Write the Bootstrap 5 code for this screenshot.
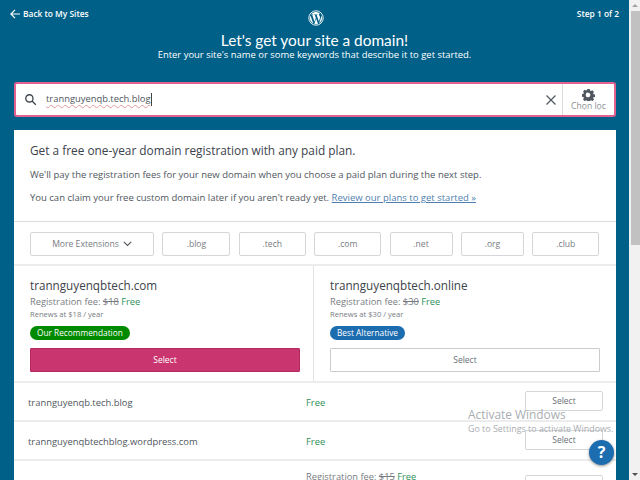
<!doctype html>
<html lang="en"><head><meta charset="utf-8"><title>Domain</title>
<link href="https://cdn.jsdelivr.net/npm/bootstrap@5.3.0/dist/css/bootstrap.min.css" rel="stylesheet">
<style>
html,body{height:480px;overflow:hidden}
body{font-family:"Open Sans","Noto Sans",sans-serif;color:#50575e;background:#fff;font-size:11px}
.shell{height:480px;position:relative}
.pagearea{width:629px;height:480px;background:#006088;overflow:hidden;flex:none}
.topbar{height:30px;padding:8px 10px 0 10px;color:#fff;font-size:8.4px;font-weight:600;line-height:12px}
.wplogo{margin:10px 0 0 -7px}
.herotitle{font-family:Lato,"Open Sans",sans-serif;font-size:15.4px;color:#fff;line-height:20px;margin:0;font-weight:400}
.herosub{font-size:9.45px;color:#fff;line-height:14px;margin:-2px 0 20px}
.searchbox{margin:0 13px 13px 14px;height:35px;background:#fff;border:2px solid #e4608f;border-radius:3px}
.searchinput{font-size:9.4px;color:#50575e;text-decoration:underline wavy #e29a9a 1px;text-underline-offset:2px;margin-left:9px}
.caretbar{display:inline-block;width:1px;height:13px;background:#444}
.filterbtn{width:52px;border-left:1px solid #dcdcde;height:100%;color:#8c8f94;font-size:8.6px;line-height:10px}
.panel{margin:0 13px 0 14px;background:#fff;height:350px;overflow:hidden}
.promo{height:92px;padding:12px 16px 0;border-bottom:1px solid #dcdcde}
.promo h2{font-size:11.85px;font-weight:400;color:#3c434a;line-height:17px;margin:0 0 9px}
.promo p{font-size:9.5px;line-height:13px;margin:0 0 10px;color:#50575e}
.promo a{color:#4f7fb0}
.tldrow{height:44px;padding:10px 16px 0;gap:8.4px;border-bottom:2px solid #ececec}
.tldbtn{background:#fff;border:1px solid #d5d6d8;border-radius:2px;height:24px;font-size:8.6px;color:#787c82;padding:0;display:flex;align-items:center;justify-content:center;gap:4px;flex:none}
.w-more{width:124px}.w-a{width:68px}.w-b{width:67px}.w-c{width:63px}
.featured{height:117px;border-bottom:2px solid #ececec}
.featcell{padding:11px 16px 0;flex:none}
.cell-a{width:300px;border-right:1px solid #e3e3e3}
.cell-b{width:301px;padding-right:15px}
.domname{font-size:11.7px;color:#3c434a;line-height:17px}
.fee{font-size:9.3px;line-height:14px;color:#787c82}
.featcell .fee{margin-top:1px}
.freetxt{color:#2f8f5b}
.renew{font-size:7.6px;line-height:12px;margin-top:-1px;color:#787c82}
.tagpill{display:block;width:fit-content;margin-top:6px;font-size:8.3px;line-height:14px;height:14px;padding:0 7px;border-radius:8px;color:#fff}
.tag-g{background:#008a00}.tag-b{background:#1c6cb0}
.pickbtn{display:block;width:270px;height:24px;margin-top:8px;font-size:8.5px;padding:0;border-radius:1px}
.pick-p{background:#c9356e;border:1px solid #b5285f;color:#fff}
.pick-o{background:#fff;border:1px solid #c9cbce;color:#6c7075}
.resultrow{height:39px;border-bottom:2px solid #ececec;padding:0 13px 0 14px;font-size:9.4px;color:#50575e}
.resultname{width:278px}
.resultrow>.resultname,.resultrow>.freetxt{margin-top:3px}
.smallpick{width:78px;height:20px;margin-top:-1px;background:#fff;border:1px solid #d5d6d8;border-radius:2px;font-size:8.5px;color:#6c7075;padding:0}
.resultlast{border:0;height:20px;padding-top:9px;align-items:flex-start!important}
.resultlast .smallpick{margin-top:5px}
.vscroll{width:11px;background:#f1f1f1;position:relative;flex:none}
.thumb{position:absolute;left:2px;right:0;top:11px;height:234px;background:#c1c1c1}
.arrowup{position:absolute;top:4px;left:3px;width:0;height:0;border:3px solid transparent;border-top:0;border-bottom:3px solid #a3a3a3}
.arrowdown{position:absolute;bottom:4px;left:3px;width:0;height:0;border:3px solid transparent;border-bottom:0;border-top:3px solid #505050}
.watermark{position:absolute;left:468px;top:407px;color:#a9adb1;font-size:8.9px;line-height:14px;pointer-events:none;white-space:nowrap}
.watermark b{display:block;font-weight:400;font-size:11.9px;line-height:15px}
.helpbubble{position:absolute;left:589px;top:440px;width:25px;height:25px;border-radius:50%;background:#1c6cb0;color:#fff;font-weight:700;font-size:16px;line-height:25px;text-align:center;box-shadow:0 1px 3px rgba(0,0,0,.45)}
</style></head><body>
<div class="shell d-flex">
<div class="pagearea">
  <div class="topbar d-flex justify-content-between align-items-start position-relative">
    <span class="d-flex align-items-center" style="gap:3px"><svg width="10" height="10" viewBox="0 0 10 10" fill="none" stroke="#fff" stroke-width="1.2"><path d="M5 .8 .9 5 5 9.200M1 5h9"/></svg>Back to My Sites</span>
    <span>Step 1 of 2</span>
    <svg class="wplogo position-absolute top-0 start-50" width="16" height="16" viewBox="0 0 16 16"><circle cx="8" cy="8" r="7.200" fill="none" stroke="#fff" stroke-width=".9"/><path fill="#fff" d="M1.900 8c0 2.400 1.400 4.500 3.400 5.500L2.400 5.600C2.100 6.300 1.900 7.100 1.900 8zm10.200-.3c0-.8-.3-1.300-.5-1.700-.3-.5-.6-.9-.6-1.400 0-.5.4-1 1-1h.1A6.100 6.100 0 0 0 3 4.600h.4c.6 0 1.600-.1 1.600-.1.3 0 .4.500 0 .5 0 0-.3 0-.7.100l2.200 6.600 1.300-4-1-2.600c-.3 0-.6-.1-.6-.1-.3 0-.3-.5 0-.5 0 0 1 .1 1.600.1.600 0 1.600-.1 1.600-.1.300 0 .4.500 0 .5 0 0-.3 0-.7.100l2.200 6.500.6-2c.3-.9.500-1.500.5-2zM8.100 8.600l-1.800 5.300a6.100 6.100 0 0 0 3.800-.1l-.1-.1zm5.300-3.500.1.600c0 .6-.1 1.300-.5 2.100l-1.900 5.400A6.100 6.100 0 0 0 13.400 5.100z"/></svg>
  </div>
  <div class="text-center">
    <h1 class="herotitle">Let's get your site a domain!</h1>
    <p class="herosub">Enter your site's name or some keywords that describe it to get started.</p>
  </div>
  <div class="searchbox d-flex align-items-center">
    <svg class="ms-2" width="13" height="13" viewBox="0 0 14 14" fill="none" stroke="#3c434a" stroke-width="1.400"><circle cx="5.800" cy="5.800" r="3.900"/><path d="m8.700 8.700 4 4"/></svg>
    <span class="searchinput">trannguyenqb.tech.blog</span><span class="caretbar"></span>
    <svg class="ms-auto" style="margin-right:1px" width="12" height="12" viewBox="0 0 12 12" stroke="#50575e" stroke-width="1.200"><path d="m1.500 1.500 9 9m0-9-9 9"/></svg>
    <div class="filterbtn ms-1 d-flex flex-column align-items-center justify-content-center">
      <svg width="13" height="13" viewBox="0 0 14 14"><path fill="#50575e" fill-rule="evenodd" d="M5.700 1h2.600l.3 1.700 1 .5 1.500-.9 1.800 1.900-.9 1.400.4 1.100 1.600.3v2.600l-1.600.3-.4 1 1 1.400-1.800 1.800-1.500-.9-1 .4-.3 1.700H5.700l-.3-1.700-1-.4-1.500.9-1.800-1.800.9-1.500-.4-1-1.600-.3V6.500l1.600-.3.400-1.100-.9-1.400 1.800-1.900 1.500.9 1-.5zM7 5a2.500 2.500 0 1 0 0 4.900A2.500 2.500 0 0 0 7 5z"/></svg>
      <span>Chọn lọc</span>
    </div>
  </div>
  <div class="panel">
    <div class="promo">
      <h2>Get a free one-year domain registration with any paid plan.</h2>
      <p>We'll pay the registration fees for your new domain when you choose a paid plan during the next step.</p>
      <p>You can claim your free custom domain later if you aren't ready yet. <a href="#">Review our plans to get started »</a></p>
    </div>
    <div class="tldrow d-flex">
      <button class="tldbtn w-more">More Extensions <svg width="9" height="6" viewBox="0 0 9 6" fill="none" stroke="#50575e" stroke-width="1.100"><path d="m.8.800 3.700 3.700L8.200.8"/></svg></button>
      <button class="tldbtn w-a">.blog</button><button class="tldbtn w-b">.tech</button><button class="tldbtn w-b">.com</button><button class="tldbtn w-c">.net</button><button class="tldbtn w-c">.org</button><button class="tldbtn w-b">.club</button>
    </div>
    <div class="featured d-flex">
      <div class="featcell cell-a">
        <div class="domname">trannguyenqbtech.com</div>
        <div class="fee">Registration fee: <s>$18</s> <span class="freetxt">Free</span></div>
        <div class="renew">Renews at $18 / year</div>
        <span class="tagpill tag-g">Our Recommendation</span>
        <button class="pickbtn pick-p">Select</button>
      </div>
      <div class="featcell cell-b">
        <div class="domname">trannguyenqbtech.online</div>
        <div class="fee">Registration fee: <s>$30</s> <span class="freetxt">Free</span></div>
        <div class="renew">Renews at $30 / year</div>
        <span class="tagpill tag-b">Best Alternative</span>
        <button class="pickbtn pick-o">Select</button>
      </div>
    </div>
    <div class="resultrow d-flex align-items-center"><span class="resultname">trannguyenqb.tech.blog</span><span class="freetxt">Free</span><button class="smallpick ms-auto">Select</button></div>
    <div class="resultrow d-flex align-items-center"><span class="resultname">trannguyenqbtechblog.wordpress.com</span><span class="freetxt">Free</span><button class="smallpick ms-auto">Select</button></div>
    <div class="resultrow resultlast d-flex"><span class="resultname"></span><span class="fee">Registration fee: <s>$15</s> <span class="freetxt">Free</span></span><button class="smallpick ms-auto">Select</button></div>
  </div>
</div>
<div class="vscroll"><span class="arrowup"></span><span class="thumb"></span><span class="arrowdown"></span></div>
<div class="watermark"><b>Activate Windows</b>Go to Settings to activate Windows.</div>
<div class="helpbubble">?</div>
</div>
<script src="https://cdn.jsdelivr.net/npm/bootstrap@5.3.0/dist/js/bootstrap.bundle.min.js"></script>
</body></html>
